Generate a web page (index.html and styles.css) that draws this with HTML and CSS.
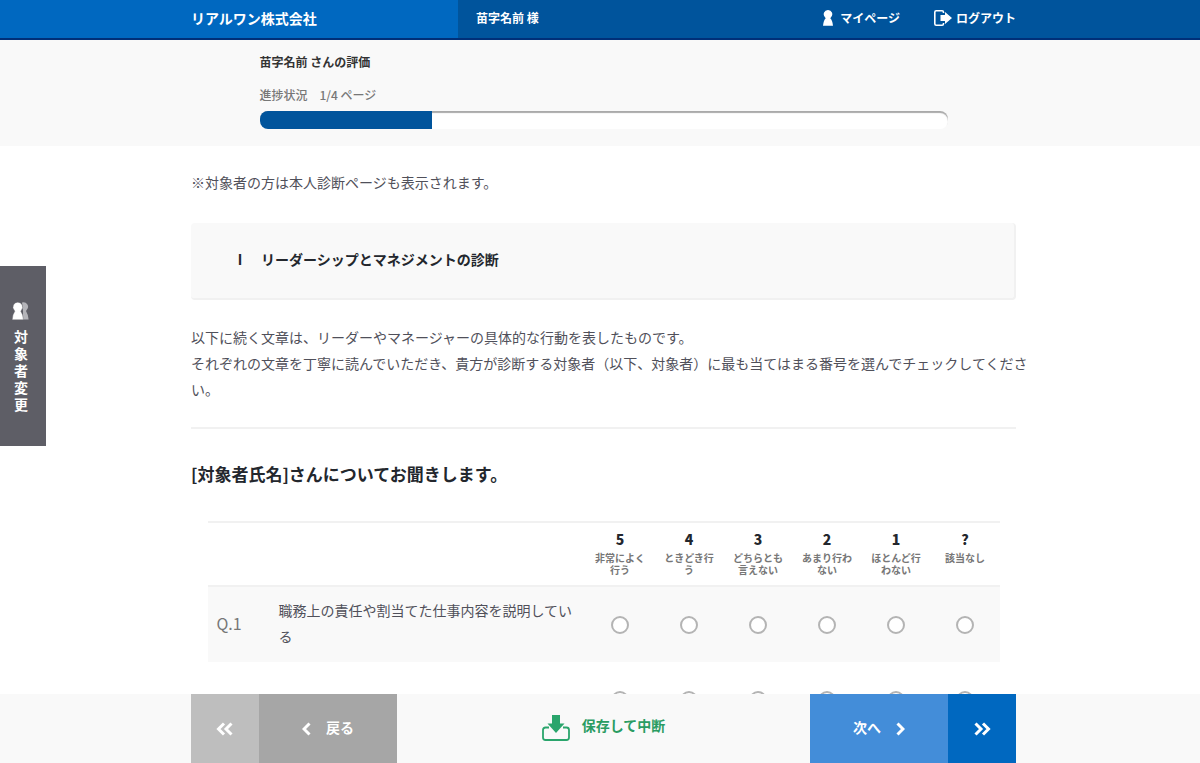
FILE: index.html
```html
<!DOCTYPE html>
<html lang="ja">
<head>
<meta charset="utf-8">
<meta name="viewport" content="width=device-width, initial-scale=1">
<title>リアルワン株式会社</title>
<link rel="stylesheet" href="styles.css">
</head>
<body>
<header class="header">
  <div class="header-company">リアルワン株式会社</div>
  <div class="header-main">
    <span class="header-user">苗字名前 様</span>
    <nav class="header-nav">
      <a class="header-link" href="#">
        <svg width="10" height="16" viewBox="0 0 10 16" aria-hidden="true"><path fill="#fff" d="M5 0a4.200 4.200 0 0 1 3 7.200L7.300 8.200Q9.500 10.500 10 15.700H0Q.5 10.500 2.700 8.200L2 7.200A4.200 4.200 0 0 1 5 0z"/></svg>
        マイページ</a>
      <a class="header-link header-logout" href="#">
        <svg width="18" height="16" viewBox="0 0 18 16" aria-hidden="true"><path fill="none" stroke="#fff" stroke-width="1.600" d="M9.500 3V2.200Q9.500.8 8.100.8H2.200Q.8.800.8 2.200v11.600q0 1.400 1.400 1.400h5.900q1.400 0 1.400-1.400V13"/><path fill="#fff" d="M6.500 5H11V2l7 6-7 6v-3H6.500z"/></svg>
        ログアウト</a>
    </nav>
  </div>
</header>

<section class="status">
  <div class="container">
    <div class="status-inner">
      <p class="status-name">苗字名前 さんの評価</p>
      <p class="status-page" id="progress-label">進捗状況　1/4 ページ</p>
      <div class="bar" role="progressbar" aria-labelledby="progress-label" aria-valuemin="0" aria-valuemax="4" aria-valuenow="1">
        <div class="bar-fill" style="width: 25%"></div>
      </div>
    </div>
  </div>
</section>

<main class="container">
  <p class="note">※対象者の方は本人診断ページも表示されます。</p>
  <h1 class="section-title"><span>Ⅰ</span><span>リーダーシップとマネジメントの診断</span></h1>
  <div class="lead">
    <p class="lead-text">以下に続く文章は、リーダーやマネージャーの具体的な行動を表したものです。<br>それぞれの文章を丁寧に読んでいただき、貴方が診断する対象者（以下、対象者）に最も当てはまる番号を選んでチェックしてください。</p>
  </div>
  <h2 class="target">[対象者氏名]さんについてお聞きします。</h2>

  <table class="questions">
    <colgroup><col class="col-number"><col class="col-text"><col class="col-choice" span="6"></colgroup>
    <thead>
      <tr>
        <td colspan="2"></td>
        <th scope="col" id="c5"><b>5</b>非常によく行う</th>
        <th scope="col" id="c4"><b>4</b>ときどき行う</th>
        <th scope="col" id="c3"><b>3</b>どちらとも言えない</th>
        <th scope="col" id="c2"><b>2</b>あまり行わない</th>
        <th scope="col" id="c1"><b>1</b>ほとんど行わない</th>
        <th scope="col" id="c0"><b>?</b>該当なし</th>
      </tr>
    </thead>
    <tbody>
      <tr>
        <td class="number">Q.1</td>
        <td class="question" id="q1">職務上の責任や割当てた仕事内容を説明している</td>
        <td class="choice"><input type="radio" name="q1" aria-labelledby="q1 c5"></td>
        <td class="choice"><input type="radio" name="q1" aria-labelledby="q1 c4"></td>
        <td class="choice"><input type="radio" name="q1" aria-labelledby="q1 c3"></td>
        <td class="choice"><input type="radio" name="q1" aria-labelledby="q1 c2"></td>
        <td class="choice"><input type="radio" name="q1" aria-labelledby="q1 c1"></td>
        <td class="choice"><input type="radio" name="q1" aria-labelledby="q1 c0"></td>
      </tr>
      <tr>
        <td class="number"></td>
        <td class="question"></td>
        <td class="choice"><input type="radio" name="q2" aria-labelledby="c5"></td>
        <td class="choice"><input type="radio" name="q2" aria-labelledby="c4"></td>
        <td class="choice"><input type="radio" name="q2" aria-labelledby="c3"></td>
        <td class="choice"><input type="radio" name="q2" aria-labelledby="c2"></td>
        <td class="choice"><input type="radio" name="q2" aria-labelledby="c1"></td>
        <td class="choice"><input type="radio" name="q2" aria-labelledby="c0"></td>
      </tr>
    </tbody>
  </table>
</main>

<button class="side-tab" type="button">
  <svg width="18" height="18" viewBox="0 0 18 18" aria-hidden="true"><path fill="#b4b4b9" d="M10 .5a4.500 4.500 0 0 1 4.800 7.300l-.8 1.200q2.200 3.500 2.600 8.500H11V9z"/><path fill="#fff" stroke="#5e5e66" stroke-width=".4" d="M5.800.2a4.800 4.800 0 0 1 3.700 7.900l-.7 1.100q2.300 3 2.600 8.600H.2Q.5 12.200 2.800 9.200l-.7-1.100A4.800 4.800 0 0 1 5.800.2z"/></svg>
  <span class="side-tab-text">対象者変更</span>
</button>

<footer class="footer">
  <div class="container footer-inner">
    <div class="footer-group">
      <button class="nav-button nav-first" type="button" aria-labelledby="back">
        <svg width="18" height="14" viewBox="0 0 18 14" aria-hidden="true"><path class="chevron" d="M8 1.500 2.500 7 8 12.500M15.500 1.500 10 7l5.500 5.500"/></svg>
      </button>
      <button class="nav-button nav-back" type="button" id="back">
        <svg width="10" height="14" viewBox="0 0 10 14" aria-hidden="true"><path class="chevron" d="M7.500 1.500 2 7l5.500 5.500"/></svg>
        <span class="nav-text">戻る</span>
      </button>
    </div>
    <button class="save" type="button">
      <svg width="28" height="26" viewBox="0 0 28 26" aria-hidden="true"><path fill="none" stroke="#2aa56c" stroke-width="1.800" d="M7 12.500H3.500q-2.500 0-2.500 2.500v7.500Q1 25 3.500 25h21q2.500 0 2.500-2.500V15q0-2.500-2.500-2.500H21"/><path fill="#2aa56c" d="M10 0h8v8.500h4.500L14 18 5.500 8.500H10z"/></svg>
      <span class="save-text">保存して中断</span>
    </button>
    <div class="footer-group">
      <button class="nav-button nav-next" type="button" id="next">
        <span class="nav-text">次へ</span>
        <svg width="10" height="14" viewBox="0 0 10 14" aria-hidden="true"><path class="chevron" d="M2.500 1.500 8 7l-5.500 5.500"/></svg>
      </button>
      <button class="nav-button nav-last" type="button" aria-labelledby="next">
        <svg width="18" height="14" viewBox="0 0 18 14" aria-hidden="true"><path class="chevron" d="M2.500 1.500 8 7l-5.500 5.500M10 1.500 15.500 7 10 12.500"/></svg>
      </button>
    </div>
  </div>
</footer>
</body>
</html>
```
FILE: styles.css
```css
* {
  box-sizing: border-box;
}

body {
  margin: 0;
  background: #fff;
  color: #50505a;
  font: 14px/26px "Noto Sans CJK JP", sans-serif;
}

p,
h1,
h2 {
  margin: 0;
}

button {
  padding: 0;
  border: 0;
  background: none;
  color: inherit;
  font: inherit;
  cursor: pointer;
}

svg {
  flex: none;
  display: block;
}

.container {
  max-width: 832px;
  margin: 0 auto;
  padding-left: 7px;
}

/* Header */
.header {
  display: grid;
  grid-template-columns: calc(50% - 142px) 1fr;
  border-bottom: 2px solid #002f78;
  background: #00549c;
  color: #fff;
  font-weight: 700;
  line-height: 36px;
}

.header-company {
  padding: 0 0 2px max(16px, calc(50vw - 409px));
  background: #0068c0;
  white-space: nowrap;
}

.header-main {
  display: flex;
  justify-content: space-between;
  padding: 0 max(16px, calc(50vw - 416px)) 2px 18px;
  font-size: 12px;
}

.header-nav {
  display: flex;
  gap: 34px;
}

.header-link {
  display: flex;
  align-items: center;
  gap: 7px;
  color: inherit;
  text-decoration: none;
}

.header-logout {
  gap: 4px;
}

/* Progress */
.status {
  padding: 10px 0 17px;
  background: #f9f9f9;
  font-size: 12px;
  font-weight: 700;
  line-height: 24px;
}

.status-inner {
  max-width: 688px;
  margin: 0 auto;
}

.status-name {
  color: #333;
}

.status-page {
  margin-top: 9px;
  color: #777;
  font-weight: 500;
}

.bar {
  overflow: hidden;
  height: 18px;
  margin-top: 4px;
  border-radius: 8px;
  background: #fff;
  box-shadow: inset 0 2px 1px #aaa;
}

.bar-fill {
  height: 100%;
  background: #00549c;
}

/* Introduction */
.note {
  padding-top: 23px;
}

.section-title {
  display: flex;
  gap: 14px;
  margin-top: 28px;
  padding: 23px 42px 26px;
  border: solid #f1f1f1;
  border-width: 0 2px 2px 0;
  border-radius: 4px;
  background: #f9f9f9;
  color: #23272d;
  font-size: 14px;
  font-weight: 700;
}

.lead {
  margin-top: 24px;
  padding-bottom: 25px;
  border-bottom: 2px solid #f1f1f1;
}

.lead-text {
  margin-right: -16px;
}

.target {
  margin-top: 32px;
  color: #23272d;
  font-size: 17px;
  font-weight: 700;
}

/* Questions */
.questions {
  width: 96%;
  margin: 34px auto 0;
  border-collapse: collapse;
  table-layout: fixed;
}

.col-number {
  width: 62px;
}

.col-choice {
  width: 69px;
}

.questions thead tr {
  border: solid #f1f1f1;
  border-width: 2px 0;
}

.questions th {
  padding: 7px 8px 9px;
  color: #777;
  font-size: 10px;
  font-weight: 700;
  line-height: 12px;
  vertical-align: top;
}

.questions b {
  display: block;
  margin-bottom: 4px;
  color: #23272d;
  font-size: 14px;
  line-height: 18px;
}

.questions tbody tr {
  height: 76px;
}

.questions tbody tr:nth-child(odd) {
  background: #f9f9f9;
}

.questions tbody td {
  padding: 0 9px;
}

.questions .number,
.questions .question {
  padding-bottom: 4px;
}

.number {
  color: #777;
  font-size: 16px;
}

.choice input {
  appearance: none;
  display: block;
  width: 18px;
  height: 18px;
  margin: 0 auto;
  border: 2px solid #b4b4b4;
  border-radius: 50%;
  background: #fff;
}

.choice input:checked {
  border: 6px solid #0068c0;
}

/* Tab fixed to the left edge */
.side-tab {
  position: fixed;
  top: 266px;
  left: 0;
  display: flex;
  flex-direction: column;
  align-items: center;
  gap: 8px;
  padding: 36px 16px 33px 12px;
  background: #5e5e66;
  color: #fff;
}

.side-tab-text {
  width: 14px;
  font-weight: 700;
  line-height: 17px;
  word-break: break-all;
}

/* Fixed footer */
.footer {
  position: fixed;
  right: 0;
  bottom: 0;
  left: 0;
  background: #f9f9f9;
}

.footer-inner {
  display: flex;
  justify-content: space-between;
}

.footer-group {
  display: flex;
}

.nav-button {
  display: flex;
  align-items: center;
  justify-content: center;
  gap: 14px;
  width: 138px;
  height: 69px;
  color: #fff;
  font-weight: 700;
}

.nav-text {
  padding-bottom: 3px;
}

.nav-first {
  width: 68px;
  background: #bebebe;
}

.nav-back {
  background: #a6a6a6;
}

.nav-next {
  background: #438dd9;
}

.nav-last {
  width: 68px;
  background: #0068c0;
}

.chevron {
  fill: none;
  stroke: #fff;
  stroke-width: 3;
}

.save {
  display: flex;
  align-items: center;
  gap: 12px;
  padding-bottom: 2px;
  color: #2a9c62;
  font-weight: 700;
}

.save-text {
  padding-bottom: 6px;
}
```
